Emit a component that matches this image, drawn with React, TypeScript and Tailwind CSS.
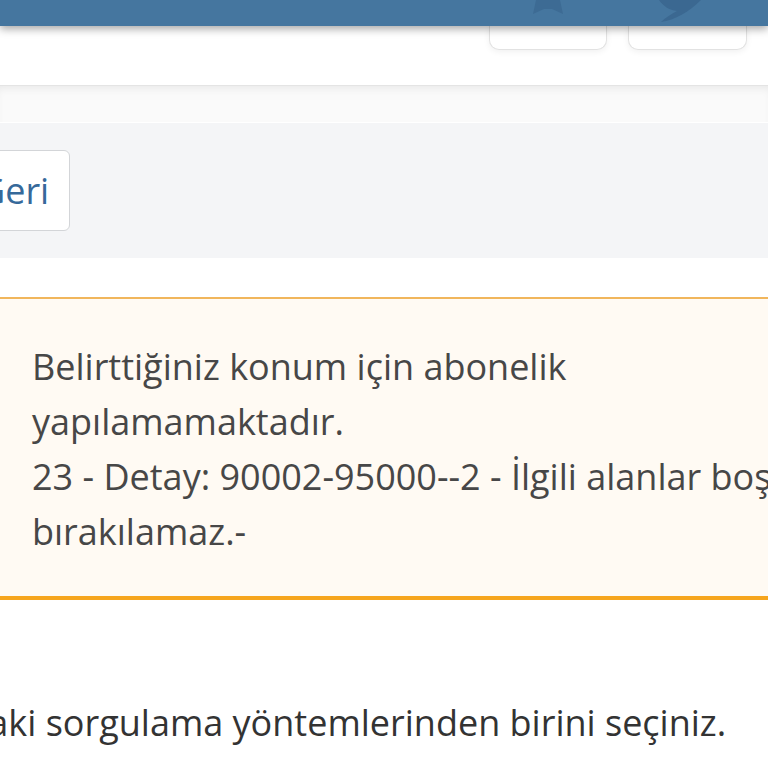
import React from 'react';

export default function App() {
    return (
        <div
            className="relative w-[768px] h-[768px] overflow-hidden bg-white"
            style={{ fontFamily: '"Open Sans", "Noto Sans", sans-serif' }}
        >
            {/* Top bar */}
            <div className="relative z-10 h-[26px] bg-[#45769f] shadow-[0_3px_8px_rgba(0,0,0,0.35)]">
                <svg className="absolute left-[530px] top-0" width="36" height="18" viewBox="0 0 36 18">
                    <path d="M6 0 L3 14 L14 9 L22 9 L33 14 L30 0 Z" fill="#3d6b94" />
                </svg>
                <svg className="absolute left-[655px] top-0" width="50" height="22" viewBox="0 0 50 22">
                    <path d="M4 0 C8 6 14 10 22 11 C16 14 10 18 6 22 C20 20 34 12 46 0 Z" fill="#3b6891" />
                </svg>
            </div>

            {/* Header area */}
            <div className="h-[60px] border-b border-[#e4e4e4] flex justify-end pr-[21px] gap-[21px]">
                <div className="w-[118px] h-[24px] rounded-b-[10px] border border-t-0 border-[#e2e2e2] bg-white shadow-[0_2px_6px_rgba(0,0,0,0.06)]"></div>
                <div className="w-[119px] h-[24px] rounded-b-[10px] border border-t-0 border-[#e2e2e2] bg-white shadow-[0_2px_6px_rgba(0,0,0,0.06)]"></div>
            </div>

            {/* Light band */}
            <div className="h-[36px] bg-[#fafafa] shadow-[inset_0_6px_8px_-4px_rgba(0,0,0,0.08)]"></div>

            {/* Toolbar with back button */}
            <div className="h-[135px] bg-[#f4f5f7] pt-[27px] mt-[1px]">
                <button className="-ml-[62px] h-[81px] pl-[40px] pr-[20px] rounded-[6px] border border-[#d3d5d8] bg-white text-[36px] text-[#36699a] leading-none">
                    Geri
                </button>
            </div>

            {/* Warning alert */}
            <div className="mt-[39px] border-t-2 border-b-4 border-t-[#f1b65c] border-b-[#f6a51d] bg-[#fffaf3] pl-[32px] pt-[40px] pb-[37px]">
                <p className="text-[36px] leading-[55px] text-[#474747] whitespace-nowrap">
                    Belirttiğiniz konum için abonelik
                    <br />
                    yapılamamaktadır.
                    <br />
                    23 - Detay: 90002-95000--2 - İlgili alanlar boş
                    <br />
                    bırakılamaz.-
                </p>
            </div>

            {/* Instruction */}
            <div className="mt-[101px] whitespace-nowrap">
                <p className="-ml-[237px] text-[36px] leading-[44px] text-[#333333]">
                    Lütfen aşağıdaki sorgulama yöntemlerinden birini seçiniz.
                </p>
            </div>
        </div>
    );
}
